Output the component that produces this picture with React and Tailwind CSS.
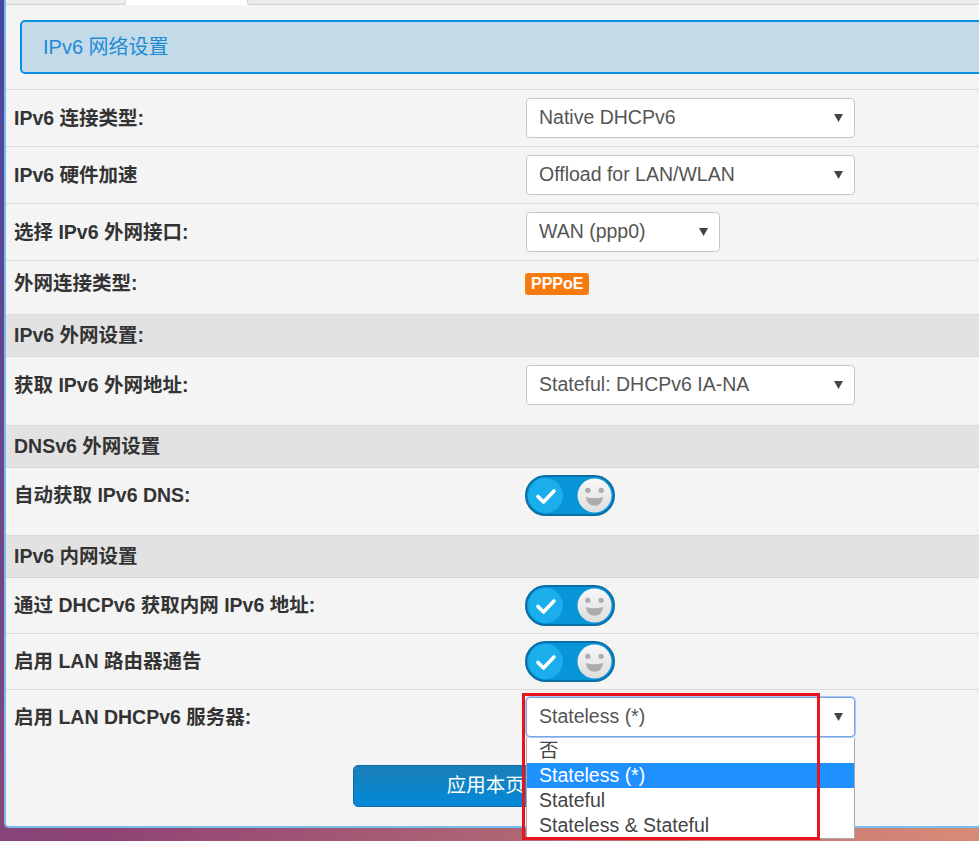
import React from "react";

const font = "font-['Liberation_Sans','Noto_Sans_CJK_SC',sans-serif]";

function Arrow() {
  return (
    <svg width="9" height="8" viewBox="0 0 9 8" className="absolute right-[11px] top-1/2 -translate-y-1/2">
      <polygon points="0,0 9,0 4.5,8" fill="#444" />
    </svg>
  );
}

function Select({ value, className = "w-[329px]", focused = false }) {
  return (
    <div
      className={
        "relative flex items-center ml-px h-[40px] rounded-[4px] bg-white pl-[12px] text-[19.5px] text-[#555] " +
        (focused ? "border border-[#7aa6ea] shadow-[0_0_0_1px_#a9c6f2]" : "border border-[#c6c6c6]") +
        " " +
        className
      }
    >
      {value}
      <Arrow />
    </div>
  );
}

function Toggle() {
  return (
    <div className="flex items-center justify-between w-[90px] h-[41px] rounded-full bg-[#0895d8] border-2 border-[#0a6ea6] px-[1px]">
      <div className="flex items-center justify-center w-[35px] h-[35px] rounded-full bg-[#1aaeec]">
        <svg width="24" height="24" viewBox="0 0 24 24">
          <path d="M4 12.5 L9.5 18 L20 7" fill="none" stroke="#fff" strokeWidth="3.6" strokeLinecap="round" strokeLinejoin="round" />
        </svg>
      </div>
      <svg width="35" height="35" viewBox="0 0 34 34">
        <defs>
          <linearGradient id="knob" x1="0" y1="0" x2="0" y2="1">
            <stop offset="0" stopColor="#f7f7f7" />
            <stop offset="1" stopColor="#dedede" />
          </linearGradient>
        </defs>
        <circle cx="17" cy="17" r="16.5" fill="url(#knob)" />
        <circle cx="10.5" cy="12" r="2.6" fill="#acacac" />
        <circle cx="23.5" cy="12" r="2.6" fill="#acacac" />
        <path d="M8.5 18.5 Q17 21 25.5 18.5 Q24 27 17 27 Q10 27 8.5 18.5 Z" fill="#acacac" />
      </svg>
    </div>
  );
}

function Row({ label, height, pt, leading, children }) {
  return (
    <div className={"flex items-start border-b border-[#dadada] " + height + " " + pt}>
      <div className={"w-[519px] pl-[8px] text-[19.5px] font-bold text-[#333] " + leading}>{label}</div>
      <div>{children}</div>
    </div>
  );
}

function Section({ title }) {
  return (
    <div className="flex items-center h-[42px] pl-[8px] bg-[#e2e2e2] border-b border-[#d6d6d6] text-[19.5px] font-bold text-[#333]">
      {title}
    </div>
  );
}

export default function App() {
  return (
    <div
      className={
        "w-[979px] h-[841px] overflow-hidden pl-[4px] bg-[linear-gradient(to_bottom_right,#46479e_0%,#8e4474_55%,#d88c76_100%)] " +
        font
      }
    >
      <div className="w-[1000px] h-[828px] bg-[#f4f4f4] border-l-2 border-b-2 border-[#79bcef] rounded-bl-[5px]">
        {/* tab strip */}
        <div className="flex h-[5px]">
          <div className="w-[120px] bg-[#ececec] border-b border-r border-[#d2d2d2] rounded-br-[3px]" />
          <div className="w-[121px] bg-white" />
          <div className="flex-1 bg-[#ececec] border-b border-l border-[#d2d2d2] rounded-bl-[3px]" />
        </div>

        <div className="pt-[15px] pb-[15px] pl-[14px] border-b border-[#dadada]">
          <div className="flex items-center h-[54px] pl-[21px] bg-[#c3dbe8] border-2 border-[#0a8fe2] rounded-[5px] text-[20px] text-[#1b8ad8]">
            IPv6 网络设置
          </div>
        </div>

        <Row label="IPv6 连接类型:" height="h-[57px]" pt="pt-[8px]" leading="leading-[40px]">
          <Select value="Native DHCPv6" />
        </Row>
        <Row label="IPv6 硬件加速" height="h-[57px]" pt="pt-[8px]" leading="leading-[40px]">
          <Select value="Offload for LAN/WLAN" />
        </Row>
        <Row label="选择 IPv6 外网接口:" height="h-[57px]" pt="pt-[8px]" leading="leading-[40px]">
          <Select value="WAN (ppp0)" className="w-[194px]" />
        </Row>
        <Row label="外网连接类型:" height="h-[54px]" pt="pt-[11px]" leading="leading-[22px]">
          <span className="inline-flex items-center h-[22px] px-[6px] rounded-[3px] bg-[#f77a0e] text-white text-[16px] font-bold">
            PPPoE
          </span>
        </Row>

        <Section title="IPv6 外网设置:" />
        <Row label="获取 IPv6 外网地址:" height="h-[69px]" pt="pt-[8px]" leading="leading-[40px]">
          <Select value="Stateful: DHCPv6 IA-NA" />
        </Row>

        <Section title="DNSv6 外网设置" />
        <Row label="自动获取 IPv6 DNS:" height="h-[68px]" pt="pt-[7px]" leading="leading-[41px]">
          <Toggle />
        </Row>

        <Section title="IPv6 内网设置" />
        <Row label="通过 DHCPv6 获取内网 IPv6 地址:" height="h-[56px]" pt="pt-[7px]" leading="leading-[41px]">
          <Toggle />
        </Row>
        <Row label="启用 LAN 路由器通告" height="h-[56px]" pt="pt-[7px]" leading="leading-[41px]">
          <Toggle />
        </Row>

        <div className="pt-[7px]">
          <div className="flex items-start">
            <div className="w-[519px] pl-[8px] text-[19.5px] font-bold text-[#333] leading-[40px]">
              启用 LAN DHCPv6 服务器:
            </div>
            <div className="relative z-10">
              <Select value="Stateless (*)" focused />
              <div className="absolute left-px top-[41px] w-[329px] bg-white border border-t-0 border-[#a9a9a9] text-[19.5px] text-[#444]">
                <div className="h-[25px] leading-[24px] pl-[12px]">否</div>
                <div className="h-[25px] leading-[24px] pl-[12px] bg-[#1e90ff] text-white">Stateless (*)</div>
                <div className="h-[25px] leading-[24px] pl-[12px]">Stateful</div>
                <div className="h-[25px] leading-[24px] pl-[12px]">Stateless &amp; Stateful</div>
              </div>
              <div className="absolute left-[-3px] top-[-4px] w-[298px] h-[147px] border-[3px] border-[#e8141e]" />
            </div>
          </div>
          <button className="mt-[28px] ml-[347px] w-[324px] h-[42px] rounded-[5px] border border-[#0c6eae] bg-[linear-gradient(to_bottom,#1a7fb6,#0389da)] text-white text-[19.5px]">
            应用本页面设置
          </button>
        </div>
      </div>
    </div>
  );
}
